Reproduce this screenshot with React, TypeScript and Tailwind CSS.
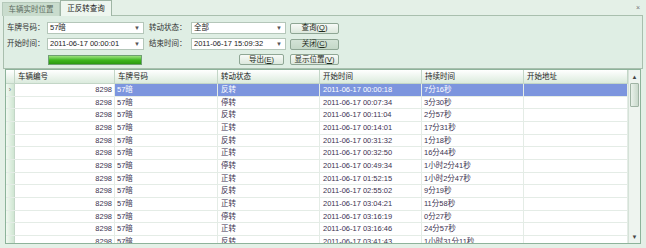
const rows = [
  ["反转", "2011-06-17 00:00:18", "7分16秒"],
  ["停转", "2011-06-17 00:07:34", "3分30秒"],
  ["反转", "2011-06-17 00:11:04", "2分57秒"],
  ["正转", "2011-06-17 00:14:01", "17分31秒"],
  ["反转", "2011-06-17 00:31:32", "1分18秒"],
  ["正转", "2011-06-17 00:32:50", "16分44秒"],
  ["停转", "2011-06-17 00:49:34", "1小时2分41秒"],
  ["正转", "2011-06-17 01:52:15", "1小时2分47秒"],
  ["反转", "2011-06-17 02:55:02", "9分19秒"],
  ["正转", "2011-06-17 03:04:21", "11分58秒"],
  ["停转", "2011-06-17 03:16:19", "0分27秒"],
  ["正转", "2011-06-17 03:16:46", "24分57秒"],
  ["反转", "2011-06-17 03:41:43", "1小时31分11秒"],
];

function Combo({ value }: { value: string }) {
  return (
    <div className="flex h-[12px] items-center justify-between border border-[#b4c6b9] bg-white pl-[2px] pr-[3px] text-[#222]">
      <span>{value}</span>
      <span className="text-[6px] text-[#555]">▼</span>
    </div>
  );
}

function Btn({ label, k, pressed }: { label: string; k: string; pressed?: boolean }) {
  return (
    <div
      className={
        "flex h-[11px] items-center justify-center rounded-[2px] border border-[#8ea694] text-[#1d2a20] " +
        (pressed
          ? "bg-gradient-to-b from-[#d3e3d6] to-[#c4d8c8]"
          : "bg-gradient-to-b from-[#f7faf7] to-[#dce8dd]")
      }
    >
      {label}(<span className="underline">{k}</span>)
    </div>
  );
}

const cols = ["w-[100px]", "w-[103px]", "w-[102px]", "w-[102px]", "w-[102px]", "w-[104px]"];

export default function App() {
  return (
    <div
      className="h-[248px] w-[646px] overflow-hidden bg-[#e4f0e7] text-[7.5px] leading-none"
      style={{ fontFamily: '"Liberation Sans", "Noto Sans CJK SC", sans-serif' }}
    >
      {/* tabs */}
      <div className="relative flex h-[15px] items-end pl-[2px]">
        <div className="mb-[-1px] flex h-[14px] w-[58px] items-center justify-center border border-b-0 border-[#b5c9ba] bg-[#c9dccd] text-[#5b6b60]">
          车辆实时位置
        </div>
        <div className="z-10 mb-[-1px] flex h-[16px] w-[52px] items-center justify-center border border-b-0 border-[#9fb5a5] bg-[#eef6ef] text-[#222]">
          正反转查询
        </div>
        <span className="absolute right-[6px] top-[4px] text-[7px] text-[#777]">×</span>
      </div>

      {/* query panel */}
      <div className="mx-[3px] flex h-[54px] flex-col gap-[4px] border border-[#a9bfae] bg-[#dfeee4] pl-[3px] pt-[6px] text-[#333]">
        <div className="flex items-center">
          <span className="w-[40px]">车牌号码：</span>
          <div className="w-[97px]"><Combo value="57暗" /></div>
          <span className="ml-[5px] w-[42px]">转动状态：</span>
          <div className="w-[95px]"><Combo value="全部" /></div>
          <div className="ml-[4px] w-[49px]"><Btn label="查询" k="Q" /></div>
        </div>
        <div className="flex items-center">
          <span className="w-[40px]">开始时间：</span>
          <div className="w-[97px]"><Combo value="2011-06-17 00:00:01" /></div>
          <span className="ml-[5px] w-[42px]">结束时间：</span>
          <div className="w-[95px]"><Combo value="2011-06-17 15:09:32" /></div>
          <div className="ml-[4px] w-[49px]"><Btn label="关闭" k="C" pressed /></div>
        </div>
        <div className="flex items-center">
          <div className="ml-[41px] h-[10px] w-[94px] border border-[#6f9f73] bg-gradient-to-b from-[#9be27c] via-[#3fb81e] to-[#2a9a10]" />
          <div className="ml-[97px] w-[45px]"><Btn label="导出" k="E" /></div>
          <div className="ml-[6px] w-[49px]"><Btn label="显示位置" k="V" /></div>
        </div>
      </div>

      {/* data grid */}
      <div className="mx-[5px] flex h-[175px] border border-[#8db39a] bg-white">
        <div className="flex flex-1 flex-col overflow-hidden">
          <div className="flex h-[14px] shrink-0 border-b border-[#c3d6c7] bg-gradient-to-b from-[#ffffff] to-[#dbebdd] text-[#222]">
            <div className="w-[9px] border-r border-[#c3d6c7]" />
            {["车辆编号", "车牌号码", "转动状态", "开始时间", "持续时间", "开始地址"].map((h, i) => (
              <div key={h} className={cols[i] + " flex items-center border-r border-[#c3d6c7] pl-[3px]"}>
                {h}
              </div>
            ))}
          </div>
          {rows.map((r, idx) => {
            const sel = idx === 0;
            const cell = "flex items-center border-r border-[#e4ece6] ";
            return (
              <div key={idx} className="flex h-[12.67px] shrink-0 border-b border-[#e4ece6] text-[#3b3250]">
                <div className="flex w-[9px] items-center justify-center border-r border-[#c3d6c7] bg-gradient-to-r from-[#f2f9f2] to-[#cfe6d2] text-[7px] text-[#667]">
                  {sel ? "›" : ""}
                </div>
                <div className={cell + cols[0] + " justify-end pr-[2px]"}>8298</div>
                <div className={cell + cols[1] + " pl-[2px] " + (sel ? "bg-[#7c95de] text-white" : "")}>57暗</div>
                <div className={cell + cols[2] + " pl-[3px] " + (sel ? "bg-[#7c95de] text-white" : "")}>{r[0]}</div>
                <div className={cell + cols[3] + " pl-[3px] " + (sel ? "bg-[#7c95de] text-white" : "")}>{r[1]}</div>
                <div className={cell + cols[4] + " pl-[2px] " + (sel ? "bg-[#7c95de] text-white" : "")}>{r[2]}</div>
                <div className={cell + cols[5] + (sel ? " bg-[#7c95de]" : "")} />
              </div>
            );
          })}
        </div>
        {/* scrollbar */}
        <div className="flex w-[12px] shrink-0 flex-col border-l border-[#d5e2d8] bg-[#eef4ef]">
          <div className="flex h-[13px] items-center justify-center text-[6px] text-[#444]">▲</div>
          <div className="mx-[1px] h-[24px] rounded-[1px] border border-[#9fb3a4] bg-gradient-to-r from-[#e9f1ea] to-[#c9d9cc]" />
          <div className="flex-1" />
          <div className="flex h-[12px] items-center justify-center text-[6px] text-[#444]">▼</div>
        </div>
      </div>
    </div>
  );
}
